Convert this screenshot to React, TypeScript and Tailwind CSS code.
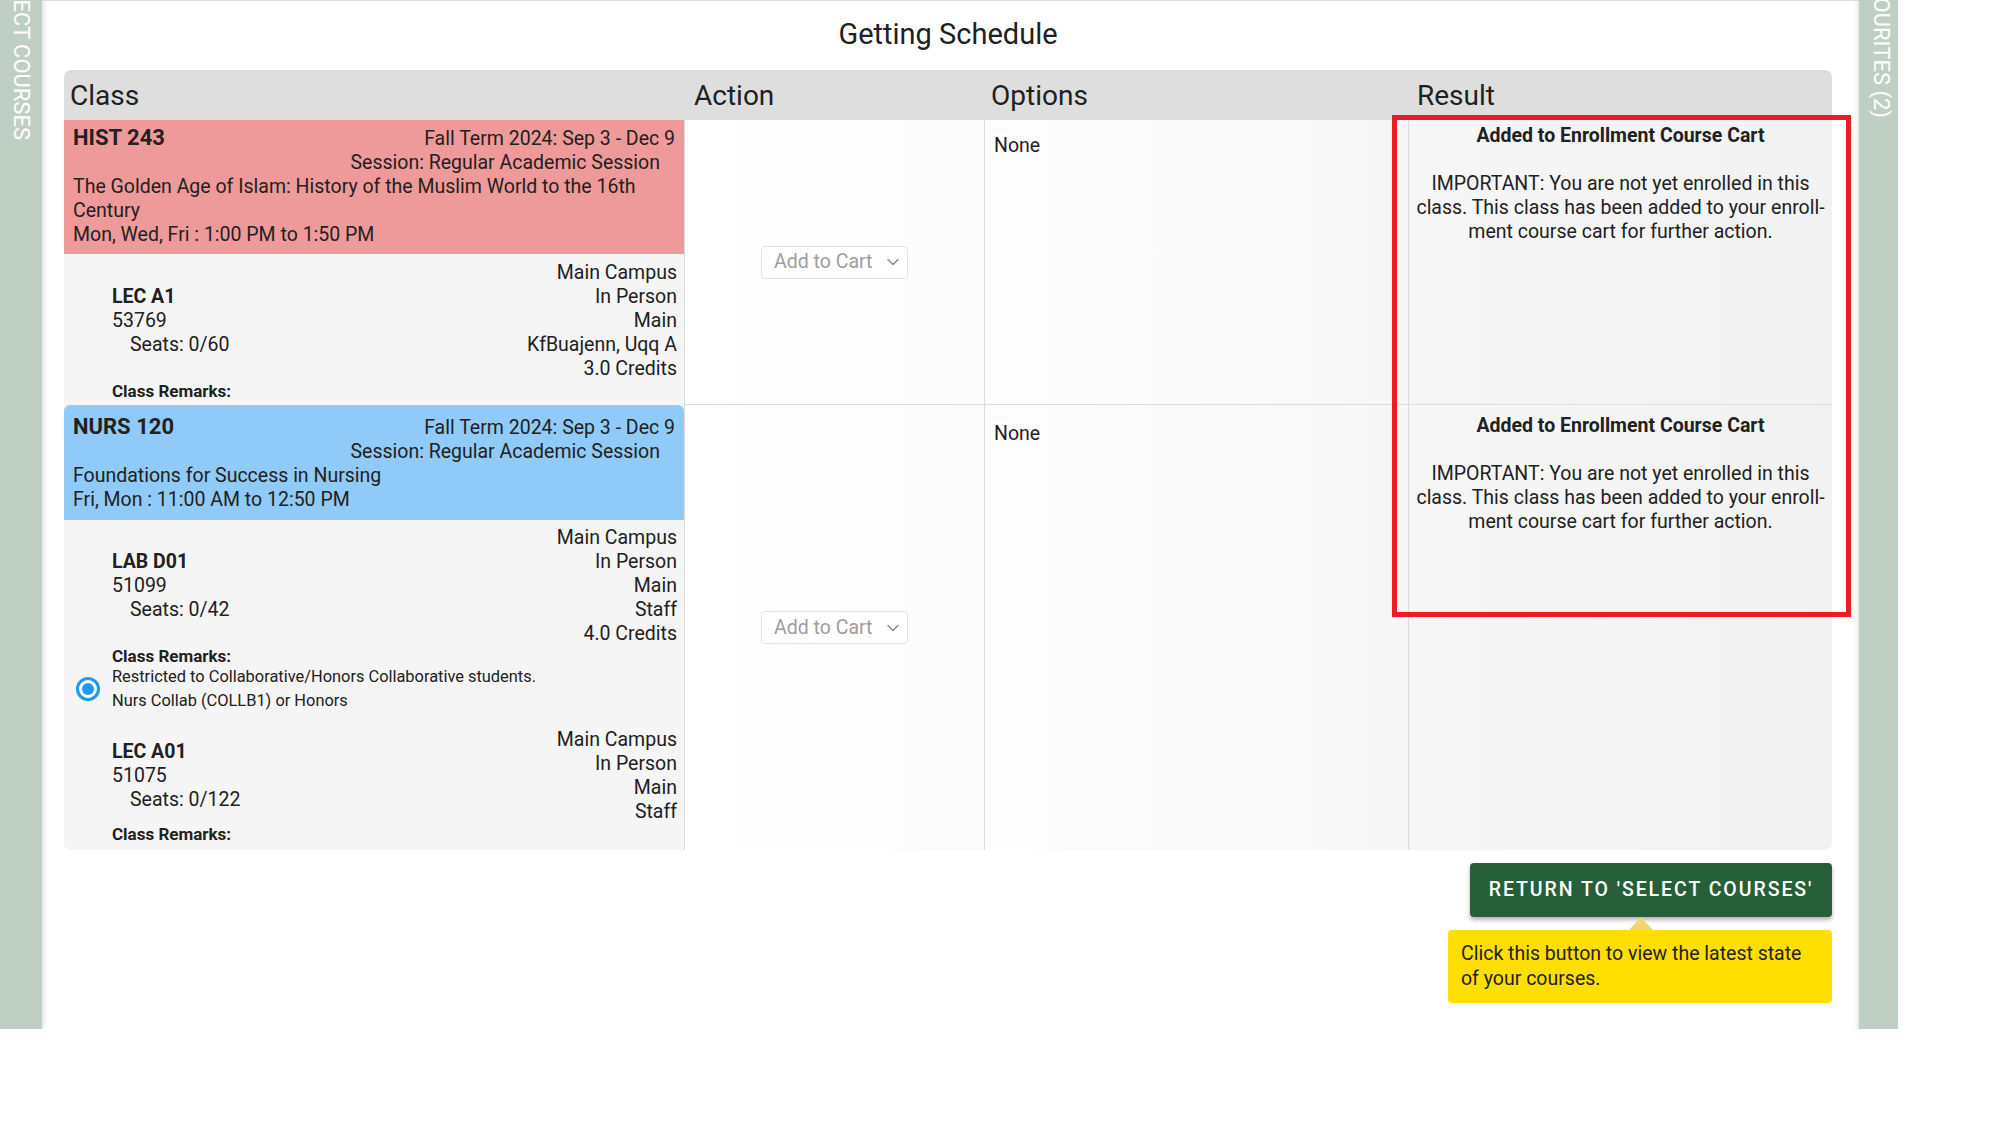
import { ChevronDown } from 'lucide-react'

type SectionProps = {
  code: string
  number: string
  seats: string
  details: string[]
  remarks?: string[]
  radio?: boolean
  top: string
}

function Section({ code, number, seats, details, remarks, radio, top }: SectionProps) {
  return (
    <div className={top}>
      <div className="flex items-center justify-between">
        <div className="pl-[48px] leading-6">
          <div className="font-bold">{code}</div>
          <div>{number}</div>
          <div className="pl-[18px]">Seats: {seats}</div>
        </div>
        <div className="pr-[7px] text-right leading-6">
          {details.map((d, i) => <div key={i}>{d}</div>)}
        </div>
      </div>
      <div className="pl-[48px] pt-[1px] text-[16.4px]">
        <div className="text-[17px] font-bold leading-[18px]">Class Remarks:</div>
        {remarks && (
          <div className="relative leading-6">
            {radio && (
              <span className="absolute left-[-36px] top-1/2 flex h-[24px] w-[24px] -translate-y-1/2 items-center justify-center rounded-full border-[3px] border-[#2196f3] bg-white">
                <span className="h-[12px] w-[12px] rounded-full bg-[#2196f3]" />
              </span>
            )}
            {remarks.map((r, i) => <div key={i}>{r}</div>)}
          </div>
        )}
      </div>
    </div>
  )
}

function AddToCart() {
  return (
    <div className="flex h-[33px] w-[147px] items-center justify-between rounded-[4px] border border-[#e2e2e2] bg-white pl-[12px] pr-[4px] text-[#9e9e9e]">
      <span>Add to Cart</span>
      <ChevronDown size={20} strokeWidth={1.75} className="text-[#8a8a8a]" />
    </div>
  )
}

function Result({ pad }: { pad: string }) {
  return (
    <div className={`${pad} border-l border-[#dcdcdc] bg-gradient-to-r from-[#f6f6f6] to-[#f2f2f2] px-1 text-center leading-6 whitespace-nowrap`}>
      <div className="font-bold">Added to Enrollment Course Cart</div>
      <div className="h-6" />
      <div>IMPORTANT: You are not yet enrolled in this</div>
      <div>class. This class has been added to your enroll-</div>
      <div>ment course cart for further action.</div>
    </div>
  )
}

export default function App() {
  return (
    <div className="flex h-[1029px] w-[2000px] bg-white font-[Roboto,'Open_Sans',Arial,sans-serif] text-[19.5px] text-[#212121]">
      <aside className="relative z-10 flex w-[42px] justify-center overflow-hidden bg-[#bfcfc3] shadow-[2px_0_5px_rgba(0,0,0,0.12)]">
        <span className="mt-[-38px] text-[22px] leading-[22px] text-white [writing-mode:vertical-rl]">SELECT COURSES</span>
      </aside>

      <main className="w-[1817px] border-t border-[#e0e0e0] pl-[22px] pr-[27px]">
        <h1 className="mt-[13px] h-[40px] text-center text-[29px] leading-[40px] font-normal">Getting Schedule</h1>

        <div className="relative mt-[16px]">
          <div className="grid h-[50px] grid-cols-[620px_300px_424px_424px] rounded-t-[7px] bg-[#dedede] text-[28px] leading-[34px]">
            <div className="pl-[6px] pt-[9px]">Class</div>
            <div className="pl-[10px] pt-[9px]">Action</div>
            <div className="pl-[7px] pt-[9px]">Options</div>
            <div className="pl-[9px] pt-[9px]">Result</div>
          </div>

          <div className="grid grid-cols-[620px_300px_424px_424px] overflow-hidden rounded-b-[7px]">
            {/* row 1 */}
            <div className="bg-[#f5f5f5] pb-[5px]">
              <div className="bg-[#ef9a9a] px-[9px] pt-[6px] pb-[7px] leading-6">
                <div className="flex items-baseline justify-between">
                  <span className="text-[22px] font-bold">HIST 243</span>
                  <span>Fall Term 2024: Sep 3 - Dec 9</span>
                </div>
                <div className="pr-[15px] text-right">Session: Regular Academic Session</div>
                <div>The Golden Age of Islam: History of the Muslim World to the 16th Century</div>
                <div>Mon, Wed, Fri : 1:00 PM to 1:50 PM</div>
              </div>
              <Section
                top="mt-[7px]"
                code="LEC A1"
                number="53769"
                seats="0/60"
                details={['Main Campus', 'In Person', 'Main', 'KfBuajenn, Uqq A', '3.0 Credits']}
              />
            </div>
            <div className="flex items-center justify-center border-b border-l border-[#dcdcdc] bg-gradient-to-r from-white to-[#fbfbfb]">
              <AddToCart />
            </div>
            <div className="border-b border-l border-[#dcdcdc] bg-gradient-to-r from-[#fdfdfd] to-[#f7f7f7] pl-[9px] pt-[14px] leading-6">None</div>
            <div className="border-b border-[#dcdcdc]">
              <Result pad="pt-[4px] h-full" />
            </div>

            {/* row 2 */}
            <div className="bg-[#f5f5f5] pb-[7px]">
              <div className="rounded-t-[6px] bg-[#90caf9] px-[9px] pt-[10px] pb-[8px] leading-6">
                <div className="flex items-baseline justify-between">
                  <span className="text-[22px] font-bold">NURS 120</span>
                  <span>Fall Term 2024: Sep 3 - Dec 9</span>
                </div>
                <div className="pr-[15px] text-right">Session: Regular Academic Session</div>
                <div>Foundations for Success in Nursing</div>
                <div>Fri, Mon : 11:00 AM to 12:50 PM</div>
              </div>
              <Section
                top="mt-[6px]"
                code="LAB D01"
                number="51099"
                seats="0/42"
                details={['Main Campus', 'In Person', 'Main', 'Staff', '4.0 Credits']}
                remarks={['Restricted to Collaborative/Honors Collaborative students.', 'Nurs Collab (COLLB1) or Honors']}
                radio
              />
              <Section
                top="mt-[15px]"
                code="LEC A01"
                number="51075"
                seats="0/122"
                details={['Main Campus', 'In Person', 'Main', 'Staff']}
              />
            </div>
            <div className="flex items-center justify-center border-l border-[#dcdcdc] bg-gradient-to-r from-white to-[#fbfbfb]">
              <AddToCart />
            </div>
            <div className="border-l border-[#dcdcdc] bg-gradient-to-r from-[#fdfdfd] to-[#f7f7f7] pl-[9px] pt-[17px] leading-6">None</div>
            <Result pad="pt-[9px]" />
          </div>

          <div className="pointer-events-none absolute left-[1328px] top-[45px] h-[502px] w-[459px] border-[5px] border-[#ed1c24]" />
        </div>

        <div className="mt-[13px] flex flex-col items-end">
          <button className="h-[54px] w-[362px] rounded-[4px] bg-[#285f3b] text-[19.5px] font-medium tracking-[0.1em] text-white shadow-[0_3px_4px_rgba(0,0,0,0.3)]">
            RETURN TO 'SELECT COURSES'
          </button>
          <div className="relative mt-[13px] h-[73px] w-[384px] rounded-[4px] bg-[#ffdf00] pl-[13px] pt-[11px] leading-[25px] text-[#222]">
            <span className="absolute left-[181px] top-[-13px] h-0 w-0 border-x-[12px] border-b-[13px] border-x-transparent border-b-[#f0d66c]" />
            Click this button to view the latest state
            <br />
            of your courses.
          </div>
        </div>
      </main>

      <aside className="relative z-10 flex w-[39px] justify-center overflow-hidden bg-[#bfcfc3] pl-[4px] shadow-[-2px_0_4px_rgba(0,0,0,0.1)]">
        <span className="mt-[-40px] text-[22px] leading-[22px] text-white [writing-mode:vertical-rl]">FAVOURITES (2)</span>
      </aside>
    </div>
  )
}
